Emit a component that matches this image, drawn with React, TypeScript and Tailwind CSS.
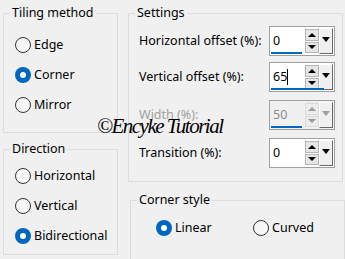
import React from 'react';

const font = { fontFamily: '"Noto Sans", "Liberation Sans", sans-serif' };

const Radio = ({ checked, label }: { checked?: boolean; label: string }) => (
  <div className="flex items-center h-[30px]">
    {checked ? (
      <div className="w-[16px] h-[16px] rounded-full bg-[#0067c0] flex items-center justify-center">
        <div className="w-[6px] h-[6px] rounded-full bg-white" />
      </div>
    ) : (
      <div className="w-[16px] h-[16px] rounded-full border border-[#333333] bg-[#f7f7f7]" />
    )}
    <span className="ml-[3px] text-[12.5px] text-black">{label}</span>
  </div>
);

const Arrow = ({ up, disabled }: { up?: boolean; disabled?: boolean }) =>
  up ? (
    <div className={`w-0 h-0 border-l-[4px] border-r-[4px] border-b-[4px] border-l-transparent border-r-transparent ${disabled ? 'border-b-[#9a9a9a]' : 'border-b-black'}`} />
  ) : (
    <div className={`w-0 h-0 border-l-[4px] border-r-[4px] border-t-[4px] border-l-transparent border-r-transparent ${disabled ? 'border-t-[#9a9a9a]' : 'border-t-black'}`} />
  );

const Spin = ({ value, disabled, underline, caret }: { value: string; disabled?: boolean; underline?: number; caret?: boolean }) => (
  <div className={`relative w-[66px] h-[30px] border border-[#a0a0a0] flex ${disabled ? 'bg-[#f0f0f0]' : 'bg-white'}`}>
    <div className={`flex-1 flex items-center pl-[3px] text-[12.5px] ${disabled ? 'text-[#8a8a8a]' : 'text-black'}`}>
      {value}
      {caret && <span className="w-[1px] h-[16px] bg-black" />}
    </div>
    {underline ? <div className="absolute left-[1px] bottom-[1px] h-[2px] bg-[#0067c0]" style={{ width: underline }} /> : null}
    <div className="w-[14px] flex flex-col gap-[1px] py-[2px]">
      <div className={`flex-1 border flex items-center justify-center ${disabled ? 'border-[#dadada] bg-[#ececec]' : 'border-[#b5b5b5] bg-[#e6e6e6]'}`}>
        <Arrow up disabled={disabled} />
      </div>
      <div className={`flex-1 border flex items-center justify-center ${disabled ? 'border-[#dadada] bg-[#ececec]' : 'border-[#b5b5b5] bg-[#e6e6e6]'}`}>
        <Arrow disabled={disabled} />
      </div>
    </div>
    <div className="w-[14px] my-[1px] mr-[1px] bg-[#f0f0f0] border border-t-white border-l-white border-r-[#696969] border-b-[#696969] flex justify-center pt-[8px]">
      <div className={`w-0 h-0 border-l-[4px] border-r-[4px] border-t-[5px] border-l-transparent border-r-transparent ${disabled ? 'border-t-[#a0a0a0]' : 'border-t-black'}`} />
    </div>
  </div>
);

const Row = ({ label, disabled, children, className }: { label: string; disabled?: boolean; children: React.ReactNode; className?: string }) => (
  <div className={`flex items-center justify-between h-[30px] ${className ?? ''}`}>
    <span className={`ml-[4px] text-[12.5px] ${disabled ? 'text-[#a0a0a0]' : 'text-black'}`}>{label}</span>
    {children}
  </div>
);

export default function App() {
  return (
    <div className="relative w-[345px] h-[259px] bg-[#f0f0f0] flex overflow-hidden" style={font}>
      <div className="ml-[3px] mt-[4px] w-[115px] flex flex-col">
        <fieldset className="border border-[#dcdcdc] pl-[6px] pb-[12px]">
          <legend className="px-[2px] text-[12.5px] leading-[18px] text-black">Tiling method</legend>
          <div className="ml-[5px] mt-[8px]">
            <Radio label="Edge" />
            <Radio checked label="Corner" />
            <Radio label="Mirror" />
          </div>
        </fieldset>
        <fieldset className="mt-[7px] border border-[#dcdcdc] pl-[6px] pb-[3px]">
          <legend className="px-[2px] text-[12.5px] leading-[18px] text-black">Direction</legend>
          <div className="ml-[5px] mt-[3px]">
            <Radio label="Horizontal" />
            <Radio label="Vertical" />
            <Radio checked label="Bidirectional" />
          </div>
        </fieldset>
      </div>
      <div className="ml-[10px] mt-[4px] flex flex-col">
        <fieldset className="w-[215px] border border-[#dcdcdc] pl-[6px] pr-[7px] pb-[13px]">
          <legend className="px-[2px] text-[12.5px] leading-[18px] text-black">Settings</legend>
          <Row label="Horizontal offset (%):" className="mt-[4px]">
            <Spin value="0" underline={31} />
          </Row>
          <Row label="Vertical offset (%):" className="mt-[6px]">
            <Spin value="65" caret underline={53} />
          </Row>
          <Row label="Width (%):" disabled className="mt-[8px]">
            <Spin value="50" disabled underline={31} />
          </Row>
          <Row label="Transition (%):" className="mt-[8px]">
            <Spin value="0" />
          </Row>
        </fieldset>
        <fieldset className="ml-[2px] mt-[9px] w-[215px] border border-[#dcdcdc] pl-[6px] pb-[20px]">
          <legend className="px-[2px] text-[12.5px] leading-[18px] text-black">Corner style</legend>
          <div className="flex ml-[19px] mt-[4px]">
            <div className="w-[97px]">
              <Radio checked label="Linear" />
            </div>
            <Radio label="Curved" />
          </div>
        </fieldset>
      </div>
      <div
        className="absolute left-[97px] top-[116px] text-[21px] leading-none italic tracking-[-1.5px] text-black whitespace-nowrap"
        style={{ fontFamily: '"Liberation Serif", serif' }}
      >
        ©Encyke Tutorial
      </div>
    </div>
  );
}
